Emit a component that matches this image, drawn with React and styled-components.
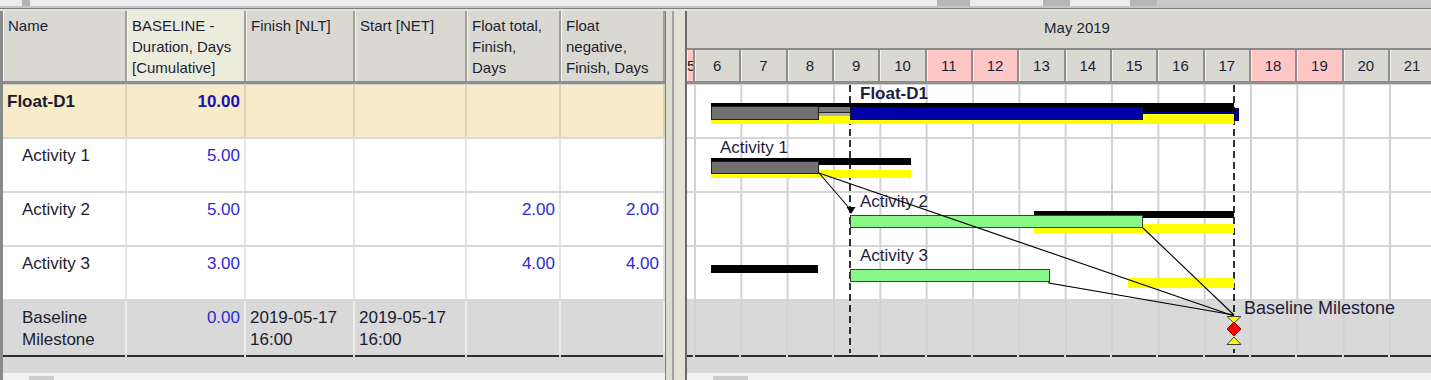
import React from "react";
import styled, { createGlobalStyle } from "styled-components";

const DAY = 46.333;
const X0 = 695; // left edge of May 6 in page pixels
const WEEKEND = [5, 11, 12, 18, 19];

const columns = [
  { key: "name", title: ["Name"], width: 124 },
  { key: "dur", title: ["BASELINE -", "Duration, Days", "[Cumulative]"], width: 119, light: true },
  { key: "fin", title: ["Finish [NLT]"], width: 109 },
  { key: "start", title: ["Start [NET]"], width: 112 },
  { key: "ft", title: ["Float total,", "Finish,", "Days"], width: 94 },
  { key: "fn", title: ["Float", "negative,", "Finish, Days"], width: 104 },
];

const numeric = { dur: true, ft: true, fn: true };

const rows = [
  { name: ["Float-D1"], level: 0, kind: "summary", dur: "10.00" },
  { name: ["Activity 1"], level: 1, dur: "5.00" },
  { name: ["Activity 2"], level: 1, dur: "5.00", ft: "2.00", fn: "2.00" },
  { name: ["Activity 3"], level: 1, dur: "3.00", ft: "4.00", fn: "4.00" },
  {
    name: ["Baseline", "Milestone"],
    level: 1,
    kind: "milestone",
    dur: "0.00",
    fin: ["2019-05-17", "16:00"],
    start: ["2019-05-17", "16:00"],
  },
];

const days = [{ d: 5, w: 8 }].concat(
  Array.from({ length: 16 }, (_, i) => ({ d: i + 6, w: DAY }))
);

const topTabs = [
  { w: 22, tone: "#ececec" },
  { w: 8, tone: "#b2b2b2" },
  { w: 907, tone: "#ececec" },
  { w: 33, tone: "#b6b6b6" },
  { w: 73, tone: "#ececec" },
  { w: 27, tone: "#b6b6b6" },
  { w: 60, tone: "#ececec" },
  { w: 27, tone: "#b6b6b6" },
  { w: 274, tone: "#c8c8c8" },
];

const GlobalStyle = createGlobalStyle`
  html, body {
    margin: 0;
    padding: 0;
    background: #ececec;
  }
  body {
    font-family: "Liberation Sans", Arial, sans-serif;
  }
`;

function App() {
  return (
    <>
      <GlobalStyle />
      <Frame>
        <TopStrip>
          {topTabs.map((t, i) => (
            <TopTab key={i} $w={t.w} $tone={t.tone} />
          ))}
        </TopStrip>
        <TopGap />
        <Main>
          <TablePane>
            <HeaderRow>
              {columns.map((c) => (
                <HeaderCell key={c.key} $w={c.width} $light={c.light}>
                  {c.title.map((line) => (
                    <div key={line}>{line}</div>
                  ))}
                </HeaderCell>
              ))}
            </HeaderRow>
            <HeaderRule />
            {rows.map((r, i) => (
              <Row key={i} $kind={r.kind}>
                {columns.map((c) => {
                  const v = r[c.key];
                  const lines = v ? (Array.isArray(v) ? v : [v]) : [];
                  return (
                    <Cell
                      key={c.key}
                      $w={c.width}
                      $kind={r.kind}
                      $num={numeric[c.key]}
                      $indent={c.key === "name" ? (r.level ? 19 : 4) : 4}
                      $bold={r.kind === "summary"}
                    >
                      {lines.map((l) => (
                        <div key={l}>{l}</div>
                      ))}
                    </Cell>
                  );
                })}
              </Row>
            ))}
            <BottomRule>
              {columns.map((c) => (
                <RuleSeg key={c.key} $w={c.width - 2} />
              ))}
            </BottomRule>
            <ScrollGray />
            <Scrollbar>
              <Thumb $left={26} $w={25} />
            </Scrollbar>
          </TablePane>

          <Splitter />

          <GanttPane>
            <MonthBar>May 2019</MonthBar>
            <DayRow>
              {days.map((d) => (
                <DayCell key={d.d} $w={d.w} $weekend={WEEKEND.includes(d.d)}>
                  {d.d}
                </DayCell>
              ))}
            </DayRow>
            <HeaderRule />
            <GanttBody>
              {rows.map((r, i) => (
                <BodyRow key={i} $kind={r.kind} />
              ))}
              <Chart />
            </GanttBody>
            <BottomRule>
              {days.map((d) => (
                <RuleSeg key={d.d} $w={d.w - 2} />
              ))}
            </BottomRule>
            <ScrollGray />
            <Scrollbar>
              <Thumb $left={26} $w={35} />
            </Scrollbar>
          </GanttPane>
        </Main>
      </Frame>
    </>
  );
}

function Chart() {
  const grid = Array.from({ length: 17 }, (_, k) => X0 + k * DAY - 1);
  return (
    <Overlay viewBox="687 85 744 270" width="744" height="270">
      {grid.map((x) => (
        <rect key={x} x={x} y={85} width={2} height={270} fill="#d2d2d2" />
      ))}
      <line x1={850} y1={85} x2={850} y2={353} stroke="#000" strokeWidth="1.6" strokeDasharray="7 4" />
      <line x1={1234} y1={85} x2={1234} y2={353} stroke="#000" strokeWidth="1.6" strokeDasharray="7 4" />

      {/* Float-D1 summary */}
      <rect x={711} y={103} width={523} height={9} fill="#000" />
      <rect x={711} y={114} width={523} height={10} fill="#ffff00" />
      <rect x={850} y={112} width={388} height={2} fill="#0000a8" />
      <rect x={819} y={107} width={31} height={5} fill="#777" />
      <rect x={819} y={112} width={31} height={1} fill="#222" />
      <rect x={819} y={113} width={31} height={3} fill="#b0b0b0" />
      <rect x={711.5} y={106.5} width={107} height={13} fill="#707070" stroke="#202020" />
      <rect x={850.5} y={107.5} width={292} height={12} fill="#0000a8" stroke="#101020" />
      <rect x={1234.5} y={108.5} width={4} height={12} fill="#0000b4" stroke="#000030" />
      <ChartLabel x={860} y={99} $bold>
        Float-D1
      </ChartLabel>

      {/* Activity 1 */}
      <rect x={711} y={158} width={200} height={7} fill="#000" />
      <rect x={711} y={170} width={200} height={8} fill="#ffff00" />
      <rect x={711.5} y={161.5} width={107} height={12} fill="#707070" stroke="#202020" />
      <ChartLabel x={720} y={153}>Activity 1</ChartLabel>

      {/* Activity 2 */}
      <rect x={1034} y={211} width={200} height={7} fill="#000" />
      <rect x={1034} y={224} width={200} height={9} fill="#ffff00" />
      <rect x={850.5} y={215.5} width={292} height={12} fill="#88f888" stroke="#404040" />
      <ChartLabel x={860} y={207}>Activity 2</ChartLabel>

      {/* Activity 3 */}
      <rect x={711} y={265} width={107} height={8} fill="#000" />
      <rect x={1128} y={278} width={106} height={10} fill="#ffff00" />
      <rect x={850.5} y={269.5} width={199} height={12} fill="#88f888" stroke="#404040" />
      <ChartLabel x={860} y={261}>Activity 3</ChartLabel>

      {/* links */}
      <g stroke="#000" strokeWidth="1.1" fill="none">
        <line x1={819} y1={173} x2={850} y2={209} />
        <line x1={819} y1={173} x2={1234} y2={316} />
        <line x1={1143} y1={228} x2={1234} y2={315} />
        <polyline points="1049,281 1049,283 1234,315" />
      </g>
      <polygon points="846.5,207 855.5,207 851,214" fill="#000" />

      {/* milestone */}
      <polygon points="1227,316.5 1241,316.5 1234,323" fill="#ffff00" stroke="#404040" />
      <polygon points="1234,322 1241,329 1234,336 1227,329" fill="#ff0000" stroke="#900000" />
      <polygon points="1234,337 1241,344.5 1227,344.5" fill="#ffff00" stroke="#404040" />
      <ChartLabel x={1244} y={314} $wide>
        Baseline Milestone
      </ChartLabel>
    </Overlay>
  );
}

const Frame = styled.div`
  width: 1431px;
  height: 380px;
  overflow: hidden;
  display: flex;
  flex-direction: column;
  background: #d8d8d8;
`;

const TopStrip = styled.div`
  height: 8px;
  display: flex;
  align-items: flex-start;
  background: #c6c6c6;
  border-bottom: 1px solid #7e7e7e;
`;

const TopTab = styled.div`
  flex: none;
  height: 6px;
  width: ${(p) => p.$w}px;
  background: ${(p) => p.$tone};
`;

const TopGap = styled.div`
  height: 2px;
  background: #e4e4de;
`;

const Main = styled.div`
  flex: 1;
  display: flex;
  min-height: 0;
`;

const TablePane = styled.div`
  flex: none;
  width: 665px;
  box-sizing: border-box;
  border-left: 3px solid #8a8a8a;
  display: flex;
  flex-direction: column;
`;

const HeaderRow = styled.div`
  display: flex;
  height: 70px;
  flex: none;
`;

const HeaderCell = styled.div`
  flex: none;
  width: ${(p) => p.$w}px;
  box-sizing: border-box;
  padding: 4px 0 0 5px;
  background: ${(p) => (p.$light ? "#ececdd" : "#d9d9d1")};
  border-right: 2px solid #a0a098;
  box-shadow: inset 1px 0 0 #f6f6f0;
  font-size: 15px;
  line-height: 21px;
  color: #1e1e34;
  white-space: nowrap;
  overflow: hidden;
`;

const HeaderRule = styled.div`
  flex: none;
  height: 3px;
  background: #8e8e8e;
  border-bottom: 1px solid #d2d2d2;
`;

const rowBg = { summary: "#f7ebc9", milestone: "#d9d9d9" };

const Row = styled.div`
  flex: none;
  display: flex;
  height: 54px;
  box-sizing: border-box;
  border-bottom: 2px solid ${(p) => (p.$kind === "milestone" ? "#d9d9d9" : "#d8d8d8")};
  background: ${(p) => rowBg[p.$kind] || "#ffffff"};
`;

const Cell = styled.div`
  flex: none;
  width: ${(p) => p.$w}px;
  box-sizing: border-box;
  padding: 6px 4px 0 ${(p) => p.$indent}px;
  border-right: 2px solid
    ${(p) => (p.$kind === "milestone" ? "rgba(255,255,255,0.55)" : "rgba(0,0,0,0.1)")};
  text-align: ${(p) => (p.$num ? "right" : "left")};
  font-size: 17px;
  line-height: 22px;
  font-weight: ${(p) => (p.$bold ? 700 : 400)};
  color: ${(p) => (p.$num ? (p.$bold ? "#1a10b4" : "#2b2bd4") : "#1c1c30")};
  white-space: nowrap;
  overflow: hidden;
`;

const BottomRule = styled.div`
  flex: none;
  display: flex;
  gap: 2px;
  height: 2px;
  overflow: hidden;
`;

const RuleSeg = styled.div`
  flex: none;
  width: ${(p) => p.$w}px;
  background: #2e2e2e;
`;

const ScrollGray = styled.div`
  flex: none;
  height: 16px;
  background: #d8d8d8;
`;

const Scrollbar = styled.div`
  flex: none;
  height: 17px;
  display: flex;
  background: #f2f2f2;
  padding-top: 3px;
  box-sizing: border-box;
`;

const Thumb = styled.div`
  margin-left: ${(p) => p.$left}px;
  width: ${(p) => p.$w}px;
  background: #cdcdcd;
`;

const Splitter = styled.div`
  flex: none;
  width: 22px;
  background: linear-gradient(
    to right,
    #7e7e7e 0 1px,
    #dcdcd0 1px 7px,
    #a4a49c 7px 9px,
    #e2e2d6 9px 20px,
    #6a6a6a 20px 22px
  );
`;

const GanttPane = styled.div`
  flex: 1;
  min-width: 0;
  display: flex;
  flex-direction: column;
  overflow: hidden;
`;

const MonthBar = styled.div`
  flex: none;
  height: 39px;
  box-sizing: border-box;
  padding: 6px 0 0 36px;
  display: flex;
  justify-content: center;
  background: #d9d9d1;
  border-bottom: 2px solid #8a8a8a;
  font-size: 15px;
  line-height: 21px;
  color: #1e1e34;
`;

const DayRow = styled.div`
  flex: none;
  display: flex;
  height: 31px;
  overflow: hidden;
`;

const DayCell = styled.div`
  flex: none;
  width: ${(p) => p.$w}px;
  box-sizing: border-box;
  background: ${(p) => (p.$weekend ? "#ffc6c6" : "#d9d9d1")};
  border-right: 2px solid #8e8e8e;
  box-shadow: inset 1px 0 0 #f4f4ee;
  text-align: center;
  line-height: 31px;
  font-size: 15px;
  color: #1e1e34;
  overflow: hidden;
`;

const GanttBody = styled.div`
  position: relative;
  flex: none;
  height: 270px;
  display: flex;
  flex-direction: column;
`;

const BodyRow = styled.div`
  flex: none;
  height: 54px;
  box-sizing: border-box;
  border-bottom: 2px solid ${(p) => (p.$kind === "milestone" ? "#d9d9d9" : "#d6d6d6")};
  background: ${(p) => (p.$kind === "milestone" ? "#d9d9d9" : "#ffffff")};
`;

const Overlay = styled.svg`
  position: absolute;
  left: 0;
  top: 0;
  display: block;
`;

const ChartLabel = styled.text`
  font-family: "Liberation Sans", Arial, sans-serif;
  font-size: ${(p) => (p.$wide ? 18 : 17)}px;
  font-weight: ${(p) => (p.$bold ? 700 : 400)};
  fill: #1e1e3c;
`;

export default App;
